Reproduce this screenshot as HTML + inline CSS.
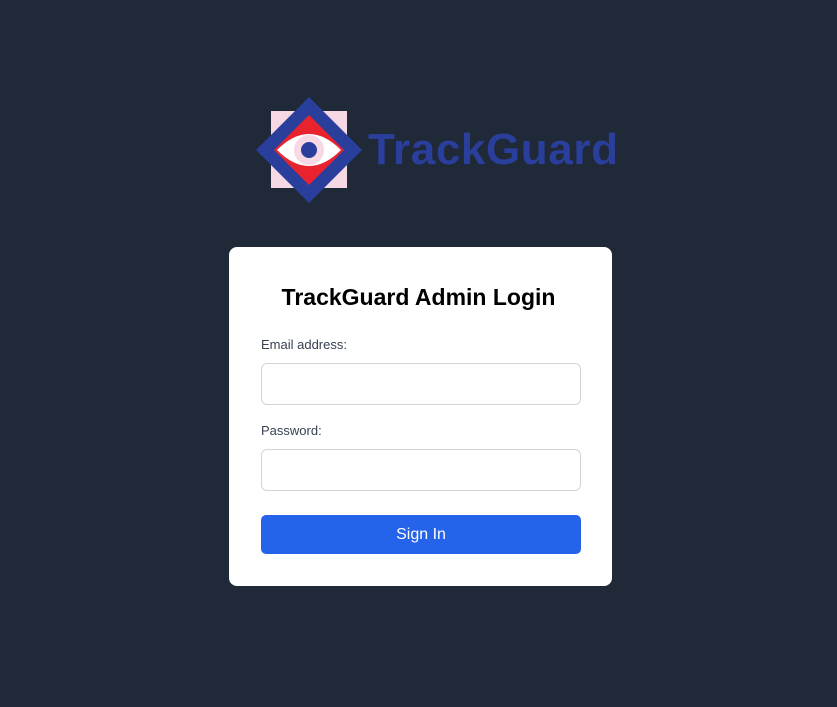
<!DOCTYPE html>
<html><head><style>
body{margin:0;background:#1f2937;width:837px;height:707px;font-family:"Liberation Sans",sans-serif;position:relative;overflow:hidden}
.card{position:absolute;left:229px;top:247px;width:383px;height:339px;background:#fff;border-radius:8px}
h1{position:absolute;left:0;right:0;top:284px;margin:0;text-align:center;font-size:23px;font-weight:bold;color:#000;line-height:26px}
.lbl{position:absolute;left:261px;font-size:13px;color:#374151}
.inp{position:absolute;left:261px;width:318px;height:40px;border:1px solid #d1d5db;border-radius:6px;background:#fff}
.btn{position:absolute;left:261px;top:515px;width:320px;height:39px;background:#2563eb;border-radius:5px;color:#fff;font-size:16px;text-align:center;line-height:40px}
.logo{position:absolute;left:368px;top:124px;font-size:44px;font-weight:bold;color:#2a3f9c;letter-spacing:0.6px;line-height:52px}
</style></head><body>
<svg style="position:absolute;left:0;top:0" width="837" height="707">
<rect x="271" y="111" width="76" height="77" fill="#f6d9e4"/>
<polygon points="309,97 362,150 309,203 256,150" fill="#2a3f9c"/>
<polygon points="309,115 344,150 309,185 274,150" fill="#e8232e"/>
<path d="M277,150 Q309,118 341,150 Q309,182 277,150Z" fill="#fff"/>
<circle cx="309" cy="150" r="15" fill="#f6d9e4"/>
<circle cx="309" cy="150" r="8" fill="#2a3f9c"/>
</svg>
<div class="logo">TrackGuard</div>
<div class="card"></div>
<h1>TrackGuard Admin Login</h1>
<div class="lbl" style="top:337px">Email address:</div>
<div class="inp" style="top:363px"></div>
<div class="lbl" style="top:423px">Password:</div>
<div class="inp" style="top:449px"></div>
<div class="btn">Sign In</div>
</body></html>
